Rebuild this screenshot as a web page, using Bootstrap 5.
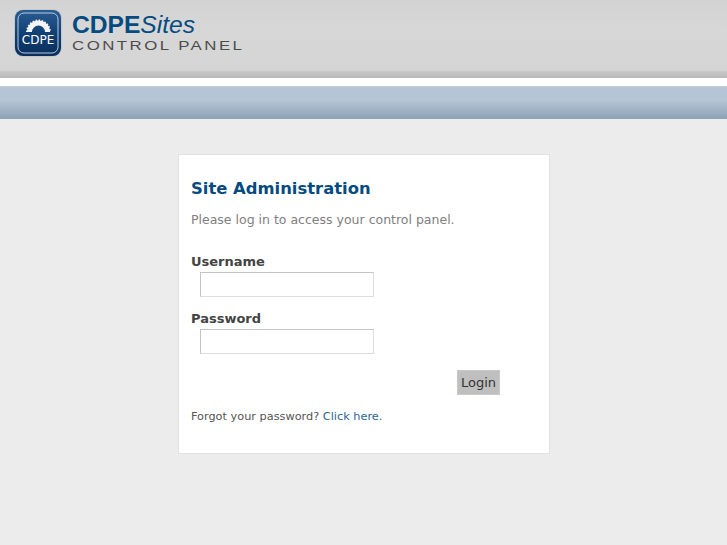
<!DOCTYPE html>
<html lang="en">
<head>
  <meta charset="utf-8"/>
  <title>Site Administration</title>
  <link href="https://cdn.jsdelivr.net/npm/bootstrap@5.3.0/dist/css/bootstrap.min.css" rel="stylesheet"/>
  <style>
    body {
      background-color: #ececec;
      font-family: "DejaVu Sans", sans-serif;
      color: #333;
    }
    .top-head {
      height: 78px;
      background: linear-gradient(#d3d3d3 0, #d7d7d7 30px, #d5d5d5 71px, #c9c9c9 71px, #b9b9b9 78px);
      padding: 8px 0 0 13px;
    }
    .logo-text {
      margin-left: 9px;
      font-family: "Liberation Sans", sans-serif;
      color: #064b80;
      line-height: 1;
    }
    .logo-main {
      font-size: 24.6px;
      height: 25px;
      margin-top: 5px;
      white-space: nowrap;
    }
    .logo-sub {
      font-size: 13.5px;
      letter-spacing: 2px;
      color: #4c4c4c;
      margin-top: 1px;
      transform: scaleX(1.245);
      transform-origin: left;
      white-space: nowrap;
    }
    .white-gap { height: 8px; background: #fff; }
    .blue-band {
      height: 33px;
      background: linear-gradient(#c2cfdc 0, #b6c5d5 2px, #b6c5d5 14px, #8ea1b6 33px);
    }
    .login-box {
      width: 372px;
      height: 300px;
      margin: 35px 0 0 178px;
      background: #fff;
      border: 1px solid #e2e2e2;
      padding: 22px 12px 0;
    }
    .login-title {
      font-size: 16.4px;
      font-weight: 700;
      color: #064b80;
      margin: 0;
      line-height: 24px;
    }
    .login-intro {
      font-size: 12.5px;
      color: #808080;
      margin: 8px 0 21px;
      line-height: 22px;
    }
    .field-gap { margin-bottom: 12px; }
    .field-label {
      display: block;
      font-size: 13px;
      font-weight: 700;
      color: #444;
      margin: 0;
      line-height: 20px;
    }
    .field-input {
      display: block;
      width: 174px;
      height: 25px;
      margin: 0 0 0 9px;
      border: 1px solid #c4c4c4;
      border-bottom-color: #ddd;
      border-right-color: #ddd;
      background: #fff;
      padding: 0 4px;
    }
    .login-btn {
      width: 43px;
      height: 25px;
      margin: 0 0 0 266px;
      padding: 0;
      font-size: 13px;
      line-height: 23px;
      color: #333;
      background: #bfbfbf;
      border: 1px solid #c9c9c9;
      border-radius: 0;
    }
    .forgot-line {
      font-size: 11.3px;
      color: #555;
      margin: 12px 0 0;
      line-height: 20px;
    }
    .forgot-line a { color: #2a6696; text-decoration: none; }
  </style>
</head>
<body>
  <header class="top-head d-flex align-items-start">
    <svg width="50" height="50" viewBox="0 0 50 50" role="img" aria-label="CDPE logo">
      <defs>
        <linearGradient id="tile" x1="0" y1="0" x2="0" y2="1">
          <stop offset="0" stop-color="#2a5d92"/>
          <stop offset=".55" stop-color="#0f3d72"/>
          <stop offset="1" stop-color="#0a2f5c"/>
        </linearGradient>
      </defs>
      <rect x="1" y="1" width="48" height="48" rx="9" fill="#c5c8cb"/>
      <rect x="2" y="2" width="46" height="46" rx="8" fill="url(#tile)"/>
      <rect x="5" y="5" width="40" height="40" rx="6" fill="none" stroke="#b9cbdd" stroke-width="1"/>
      <path d="M14 24a11.500 11.500 0 0 1 23 0h-5a6.500 6.500 0 0 0-13 0z" fill="#f2f4f6"/>
      <path d="M14 24a11.500 11.500 0 0 1 23 0" fill="none" stroke="#f2f4f6" stroke-width="2" stroke-dasharray="1.5 1.5"/>
      <text x="25" y="36" text-anchor="middle" font-family="DejaVu Sans" font-size="12" fill="#fff">CDPE</text>
    </svg>
    <div class="logo-text">
      <div class="logo-main"><b>CDPE</b><i>Sites</i></div>
      <div class="logo-sub">CONTROL PANEL</div>
    </div>
  </header>
  <div class="white-gap"></div>
  <div class="blue-band"></div>

  <main class="login-box">
    <h1 class="login-title">Site Administration</h1>
    <p class="login-intro">Please log in to access your control panel.</p>
    <form>
      <div class="field-gap">
        <label class="field-label" for="user">Username</label>
        <input class="field-input" id="user" type="text"/>
      </div>
      <div class="mb-3">
        <label class="field-label" for="pass">Password</label>
        <input class="field-input" id="pass" type="password"/>
      </div>
      <button type="button" class="btn login-btn">Login</button>
    </form>
    <p class="forgot-line">Forgot your password? <a href="#">Click here.</a></p>
  </main>

  <script src="https://cdn.jsdelivr.net/npm/bootstrap@5.3.0/dist/js/bootstrap.bundle.min.js"></script>
</body>
</html>
